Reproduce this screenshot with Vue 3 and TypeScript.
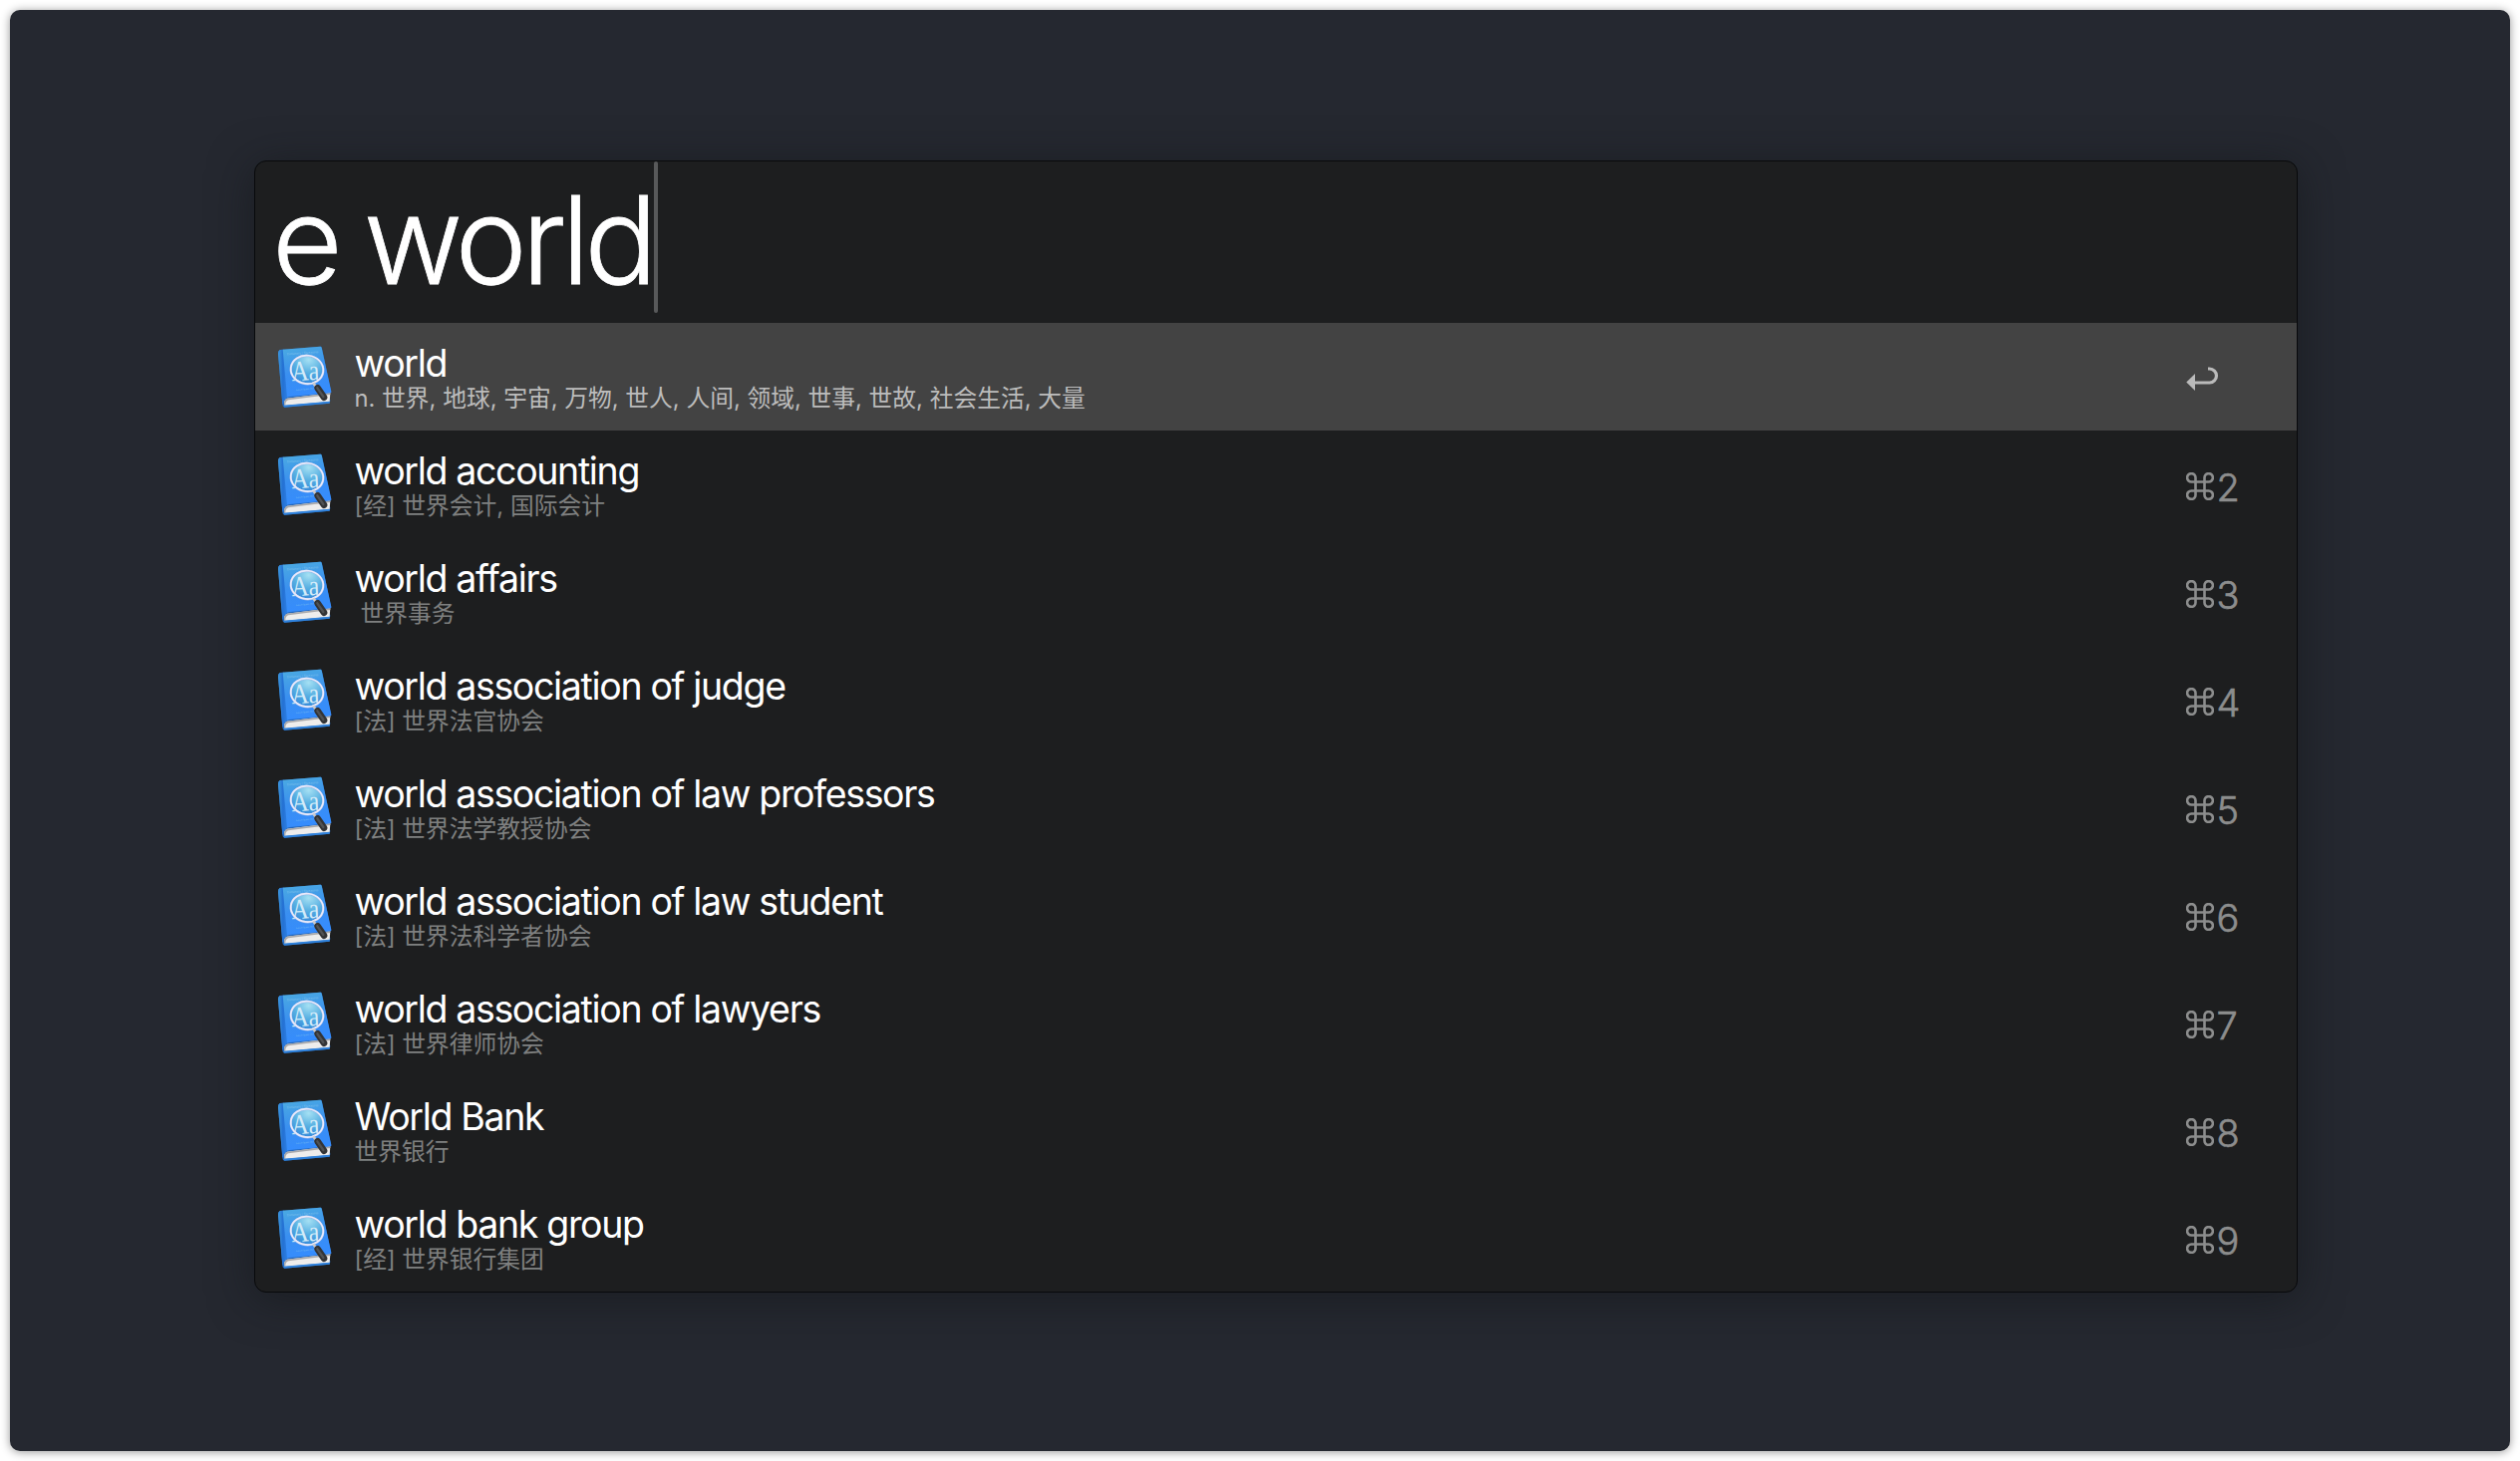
<script setup lang="ts">
interface Entry {
  title: string
  detail: string
  indent?: boolean
}

const query = 'e world'

const entries: Entry[] = [
  { title: 'world', detail: 'n. 世界, 地球, 宇宙, 万物, 世人, 人间, 领域, 世事, 世故, 社会生活, 大量' },
  { title: 'world accounting', detail: '[经] 世界会计, 国际会计' },
  { title: 'world affairs', detail: '世界事务', indent: true },
  { title: 'world association of judge', detail: '[法] 世界法官协会' },
  { title: 'world association of law professors', detail: '[法] 世界法学教授协会' },
  { title: 'world association of law student', detail: '[法] 世界法科学者协会' },
  { title: 'world association of lawyers', detail: '[法] 世界律师协会' },
  { title: 'World Bank', detail: '世界银行' },
  { title: 'world bank group', detail: '[经] 世界银行集团' },
]
</script>

<template>
  <div class="page">
    <div class="desktop">
      <main class="panel">
        <header class="search">
          <span class="query">{{ query }}</span>
          <span class="caret"></span>
        </header>
        <div class="results">
          <div
            v-for="(entry, i) in entries"
            :key="entry.title"
            class="row"
            :class="{ selected: i === 0 }"
          >
            <svg class="book" viewBox="30 30 180 204">
              <defs>
                <linearGradient id="cover" x1="0.3" y1="0" x2="0.5" y2="1">
                  <stop offset="0" stop-color="#4aa9e2" />
                  <stop offset="0.5" stop-color="#3a8ff0" />
                  <stop offset="1" stop-color="#358cff" />
                </linearGradient>
                <linearGradient id="spine" x1="0" y1="0" x2="1" y2="0">
                  <stop offset="0" stop-color="#3e9be0" />
                  <stop offset="0.45" stop-color="#2470d2" />
                  <stop offset="1" stop-color="#2f84ea" />
                </linearGradient>
                <radialGradient id="lens" cx="0.5" cy="0.15" r="0.9">
                  <stop offset="0" stop-color="#a5e0f3" />
                  <stop offset="0.5" stop-color="#58b0e2" />
                  <stop offset="1" stop-color="#2f83d8" />
                </radialGradient>
              </defs>
              <path d="M47 48 Q41 52 42 61 L55 213 Q56 222 62 221 L197 209 L199 201 L195 180 L202 177 L174 43 Q173 37 168 38 Z" fill="#2467bb" />
              <path d="M61 216 Q57 198 69 194 L199 178 L197 204 Z" fill="#eeedec" />
              <path d="M61 216 Q57 198 69 194 L199 178 L199 183 L73 199 Q63 202 64 216 Z" fill="#a9a9ab" />
              <path d="M58 215 L197 203 L197 209 L61 221 Z" fill="#2f82dc" />
              <path d="M47 48 L60 47 L74 190 Q60 194 58 211 L55 211 L42 61 Q41 52 47 48 Z" fill="url(#spine)" />
              <path d="M56 47 L168 38 Q172 38 173 42 L202 173 Q203 177 198 178 L69 190 Z" fill="url(#cover)" />
              <text x="69" y="64" transform="rotate(-4 69 64)" class="caption" textLength="94" lengthAdjust="spacingAndGlyphs">Dictionary | Thesaurus</text>
              <text x="96" y="171" transform="rotate(-5 96 171)" class="caption small">Lorem Ipsum Dolor</text>
              <ellipse cx="130" cy="108" rx="50" ry="43" transform="rotate(7 130 108)" fill="url(#lens)" />
              <text x="83" y="142" transform="rotate(-3 84 140)" class="glyphs" textLength="84" lengthAdjust="spacingAndGlyphs">Aa</text>
              <ellipse cx="129" cy="108" rx="49" ry="42.500" transform="rotate(7 129 108)" fill="none" stroke="#9db8e6" stroke-width="7" />
              <ellipse cx="129" cy="107.500" rx="49" ry="42.500" transform="rotate(7 129 108)" fill="none" stroke="#e9eafb" stroke-width="5" />
              <path d="M148 148 L158 162" stroke="#c9cbd0" stroke-width="8" />
              <path d="M161 163 L180 191" stroke="#333436" stroke-width="20" stroke-linecap="round" />
              <path d="M160 163 L178 189" stroke="#505254" stroke-width="7" stroke-linecap="round" />
            </svg>
            <div class="text">
              <div class="title">{{ entry.title }}</div>
              <div class="detail" :class="{ indent: entry.indent }">{{ entry.detail }}</div>
            </div>
            <div class="shortcut">
              <svg v-if="i === 0" class="enter" viewBox="0 0 34 28">
                <path d="M22 4 H23.500 A6.700 6.700 0 0 1 23.500 18 H8" fill="none" stroke="currentColor" stroke-width="3.200" />
                <path d="M0.300 17.500 L9 9 V26 Z" fill="currentColor" />
              </svg>
              <template v-else>
                <svg class="command" viewBox="0 0 28 28">
                  <path
                    d="M9.500 9.500 V5.500 A4.200 4.200 0 1 0 5.300 9.500 H22.700 A4.200 4.200 0 1 0 18.500 5.500 V22.500 A4.200 4.200 0 1 0 22.700 18.500 H5.300 A4.200 4.200 0 1 0 9.500 22.500 Z"
                    fill="none"
                    stroke="currentColor"
                    stroke-width="2.600"
                  />
                </svg>
                <span>{{ i + 1 }}</span>
              </template>
            </div>
          </div>
        </div>
      </main>
    </div>
  </div>
</template>

<style>
body {
  background: #fff;
}
</style>

<style scoped>
.page {
  box-sizing: border-box;
  width: 2528px;
  height: 1466px;
  padding: 10px;
  overflow: hidden;
  background: #fff;
}
.desktop {
  box-sizing: border-box;
  width: 2508px;
  height: 1446px;
  padding: 151px 213px 0 245px;
  border-radius: 10px;
  background: #252830;
  box-shadow: 0 1px 10px rgba(0, 0, 0, 0.42);
}
.panel {
  box-sizing: border-box;
  width: 2050px;
  height: 1136px;
  border: 1px solid #08090b;
  border-radius: 12px;
  overflow: hidden;
  background: #1d1e1f;
  box-shadow: 0 6px 44px rgba(18, 22, 25, 0.6);
  font-family: Inter, 'Noto Sans CJK SC', sans-serif;
}
.search {
  display: flex;
  height: 162px;
  padding-left: 17px;
  align-items: flex-start;
}
.query {
  width: 383px;
  line-height: 158px;
  font-size: 122px;
  font-weight: 300;
  letter-spacing: -5.400px;
  word-spacing: -2.500px;
  color: #fff;
  -webkit-text-stroke: 0.800px #fff;
  white-space: pre;
}
.caret {
  width: 4px;
  height: 152px;
  border-radius: 2px;
  background: #58595a;
}
.row {
  display: flex;
  height: 108px;
  padding-left: 19px;
}
.selected {
  background: #434343;
}
.book {
  width: 60px;
  height: 68px;
  margin-top: 20.500px;
}
.caption {
  font: 10px 'Liberation Sans', sans-serif;
  fill: #9bd0f0;
  opacity: 0.7;
}
.small {
  font-size: 7px;
}
.glyphs {
  font: 86px 'Liberation Serif', serif;
  fill: #d3ebf9;
}
.text {
  flex: 1;
  padding: 18px 0 0 20.500px;
  white-space: nowrap;
}
.title {
  height: 46px;
  line-height: 46px;
  font-size: 37.500px;
  letter-spacing: -1.340px;
  color: #fff;
}
.detail {
  height: 28px;
  margin-top: -2px;
  line-height: 28px;
  font-size: 23.770px;
  font-weight: 400;
  color: #7f8080;
}
.indent {
  padding-left: 6px;
}
.selected .detail {
  color: #bcbcbc;
}
.shortcut {
  display: flex;
  width: 111px;
  padding-top: 34px;
  line-height: 46px;
  font-size: 38px;
  font-weight: 300;
  color: #8c8d8d;
}
.shortcut span {
  -webkit-text-stroke: 0.600px currentColor;
}
.command {
  width: 28px;
  height: 28px;
  margin: 8px 2.500px 0 0;
}
.enter {
  width: 34px;
  height: 28px;
  margin-top: 8px;
  color: #bababa;
}
</style>
